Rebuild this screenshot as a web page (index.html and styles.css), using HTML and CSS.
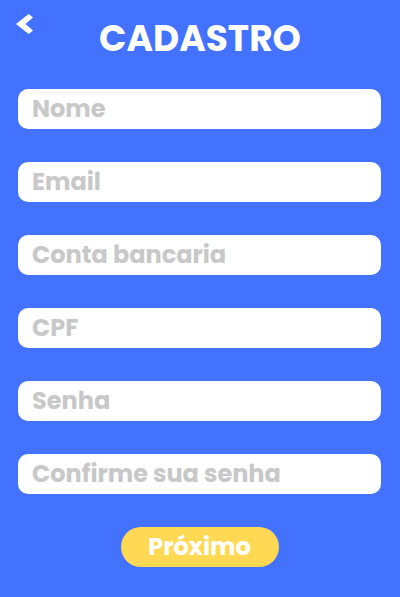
FILE: index.html
```html
<!DOCTYPE html>
<html lang="pt-BR">
<head>
<meta charset="utf-8">
<meta name="viewport" content="width=device-width, initial-scale=1">
<title>Cadastro</title>
<link rel="stylesheet" href="styles.css">
</head>
<body>
<header class="header">
  <a class="back" href="#" aria-label="Voltar">
    <svg class="back-icon" viewBox="0 0 18 20" aria-hidden="true"><path d="M12.7 0L17 3.6L9.5 10L17 16.4L12.7 20L0 10z"/></svg>
  </a>
  <h1 class="title">CADASTRO</h1>
</header>
<form class="form">
  <input class="field" type="text" placeholder="Nome" aria-label="Nome">
  <input class="field" type="email" placeholder="Email" aria-label="Email">
  <input class="field" type="text" placeholder="Conta bancaria" aria-label="Conta bancaria">
  <input class="field" type="text" placeholder="CPF" aria-label="CPF">
  <input class="field" type="password" placeholder="Senha" aria-label="Senha">
  <input class="field" type="password" placeholder="Confirme sua senha" aria-label="Confirme sua senha">
  <button class="next" type="submit">Próximo</button>
</form>
</body>
</html>
```
FILE: styles.css
```css
* { box-sizing: border-box; }
body {
  margin: 0;
  min-height: 100vh;
  background: #4272ff;
  font-family: Poppins, Inter, sans-serif;
  font-weight: 700;
}
.header {
  display: grid;
  grid-template-columns: 18px 1fr 18px;
  align-items: start;
  padding: 14px 16px 0;
}
.back { display: block; }
.back-icon { display: block; width: 18px; height: 20px; fill: #fff; }
.title {
  margin: 0;
  color: #fff;
  font-size: 36px;
  line-height: 50px;
  text-align: center;
}
.form {
  display: flex;
  flex-direction: column;
  gap: 33px;
  padding: 25px 19px 30px 18px;
}
.field {
  width: 100%;
  height: 40px;
  padding: 0 14px 2px;
  border: 0;
  border-radius: 10px;
  background: #fff;
  color: #333;
  font: inherit;
  font-size: 24px;
}
.field::placeholder { color: #c8c8c8; opacity: 1; }
.next {
  align-self: center;
  width: 158px;
  height: 40px;
  padding: 0 0 2px;
  border: 0;
  border-radius: 20px;
  background: #ffd953;
  color: #fff;
  font: inherit;
  font-size: 24px;
}
```
